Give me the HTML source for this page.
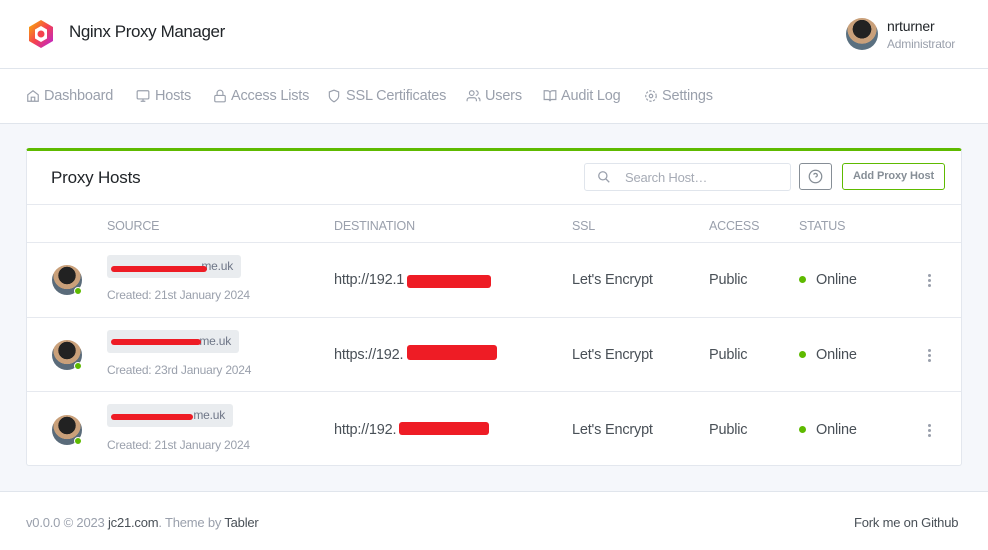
<!DOCTYPE html>
<html><head><meta charset="utf-8"><style>
*{box-sizing:border-box;margin:0;padding:0}
body{width:988px;height:550px;background:#f5f7fb;font-family:"Liberation Sans",sans-serif;color:#495057;position:relative;overflow:hidden;font-size:14px;letter-spacing:-0.2px}
.abs{position:absolute}
.hdr{left:0;top:0;width:988px;height:69px;background:#fff;border-bottom:1px solid #e0e5ec}
.nav{left:0;top:69px;width:988px;height:55px;background:#fff;border-bottom:1px solid #e0e5ec}
.nav span{position:absolute;top:19px;color:#9aa0ac;font-size:14.5px}
.nav svg{position:absolute;top:20px}
.card{left:26px;top:148px;width:936px;height:318px;background:#fff;border:1px solid #e3e7ee;border-top:3px solid #5eba00;border-radius:3px}
.line{position:absolute;left:0;width:934px;height:1px;background:#e6e9ef}
.th{position:absolute;top:68px;font-size:12.5px;color:#9aa0ac}
.av{position:absolute;width:30px;height:30px;border-radius:50%;background:radial-gradient(circle at 50% 35%,#222 0 35%,#c9a07a 36% 55%,#5a6b7a 56%);}
.dot{position:absolute;width:8px;height:8px;border-radius:50%;background:#5eba00;border:1px solid #fff}
.pill{position:absolute;background:#e9ecef;border-radius:3px;height:23px;font-size:12px;color:#6e7687;padding:4px 8px;text-align:right}
.red{position:absolute;background:#ee1c25;border-radius:3px}
.sm{position:absolute;font-size:12px;color:#9aa0ac}
.td{position:absolute;font-size:14.5px;color:#495057}
.gd{position:absolute;width:7px;height:7px;border-radius:50%;background:#5eba00}
.kb{position:absolute;width:3px;height:3px;border-radius:50%;background:#9aa0ac}
</style></head><body>
<div class="abs hdr">
<svg class="abs" style="left:27px;top:19px" width="28" height="30" viewBox="0 0 28 30"><defs><linearGradient id="g" x1="0" y1="0" x2="1" y2="1"><stop offset="0" stop-color="#f7b500"/><stop offset=".5" stop-color="#f5424d"/><stop offset="1" stop-color="#b620e0"/></linearGradient></defs><polygon points="14,1 26,8 26,22 14,29 2,22 2,8" fill="url(#g)"/><polygon points="14,7 20,10.5 20,19.5 14,23 8,19.5 8,10.5" fill="#fff"/><circle cx="14" cy="15" r="3.5" fill="#f5424d"/></svg>
<div class="abs" style="left:69px;top:22px;font-size:17px;letter-spacing:-0.4px;color:#212529">Nginx Proxy Manager</div>
<div class="abs" style="left:846px;top:18px;width:32px;height:32px;border-radius:50%;background:radial-gradient(circle at 50% 35%,#222 0 35%,#c9a07a 36% 55%,#5a7080 56%)"></div>
<div class="abs" style="left:887px;top:18px;font-size:14px;color:#212529">nrturner</div>
<div class="abs" style="left:887px;top:37px;font-size:12px;color:#9aa0ac">Administrator</div>
</div>
<div class="abs nav">
<svg style="left:26px" width="14" height="14" viewBox="0 0 24 24" fill="none" stroke="#9aa0ac" stroke-width="2"><path d="M3 10l9-7 9 7v11H3z M9 21v-7h6v7"/></svg><span style="left:44px">Dashboard</span>
<svg style="left:136px" width="14" height="14" viewBox="0 0 24 24" fill="none" stroke="#9aa0ac" stroke-width="2"><rect x="2" y="3" width="20" height="14" rx="2"/><path d="M8 21h8M12 17v4"/></svg><span style="left:155px">Hosts</span>
<svg style="left:213px" width="14" height="14" viewBox="0 0 24 24" fill="none" stroke="#9aa0ac" stroke-width="2"><rect x="3" y="11" width="18" height="11" rx="2"/><path d="M7 11V7a5 5 0 0110 0v4"/></svg><span style="left:231px">Access Lists</span>
<svg style="left:327px" width="14" height="14" viewBox="0 0 24 24" fill="none" stroke="#9aa0ac" stroke-width="2"><path d="M12 22s8-4 8-10V5l-8-3-8 3v7c0 6 8 10 8 10z"/></svg><span style="left:346px">SSL Certificates</span>
<svg style="left:466px" width="15" height="14" viewBox="0 0 24 24" fill="none" stroke="#9aa0ac" stroke-width="2"><circle cx="9" cy="7" r="4"/><path d="M1 21v-2a4 4 0 014-4h8a4 4 0 014 4v2M16 3a4 4 0 010 8M23 21v-2a4 4 0 00-3-4"/></svg><span style="left:485px">Users</span>
<svg style="left:543px" width="14" height="14" viewBox="0 0 24 24" fill="none" stroke="#9aa0ac" stroke-width="2"><path d="M2 3h6a4 4 0 014 4v14a3 3 0 00-3-3H2zM22 3h-6a4 4 0 00-4 4v14a3 3 0 013-3h7z"/></svg><span style="left:561px">Audit Log</span>
<svg style="left:644px" width="14" height="14" viewBox="0 0 24 24" fill="none" stroke="#9aa0ac" stroke-width="2"><circle cx="12" cy="12" r="3"/><circle cx="12" cy="12" r="9" stroke-dasharray="4 2.5"/></svg><span style="left:662px">Settings</span>
</div>
<div class="abs card">
<div class="abs" style="left:24px;top:17px;font-size:17px;color:#212529">Proxy Hosts</div>
<div class="abs" style="left:557px;top:12px;width:207px;height:28px;border:1px solid #e0e5ec;border-radius:3px"></div>
<svg class="abs" style="left:570px;top:19px" width="14" height="14" viewBox="0 0 24 24" fill="none" stroke="#9aa0ac" stroke-width="2.2"><circle cx="10" cy="10" r="7"/><path d="M15 15l6 6"/></svg>
<div class="abs" style="left:598px;top:19px;font-size:13px;color:#a6abb5">Search Host…</div>
<div class="abs" style="left:772px;top:12px;width:33px;height:27px;border:1px solid #868e96;border-radius:3px"></div>
<svg class="abs" style="left:781px;top:18px" width="15" height="15" viewBox="0 0 24 24" fill="none" stroke="#868e96" stroke-width="2"><circle cx="12" cy="12" r="10"/><path d="M9.1 9a3 3 0 015.8 1c0 2-3 3-3 3M12 17h.01"/></svg>
<div class="abs" style="left:815px;top:12px;width:103px;height:27px;border:1px solid #5eba00;border-radius:3px;font-size:11px;font-weight:bold;color:#868e96;text-align:center;line-height:25px;white-space:nowrap;letter-spacing:-0.1px">Add Proxy Host</div>
<div class="line" style="top:53px"></div>
<div class="th" style="left:80px">SOURCE</div><div class="th" style="left:307px">DESTINATION</div><div class="th" style="left:545px">SSL</div><div class="th" style="left:682px">ACCESS</div><div class="th" style="left:772px">STATUS</div>
<div class="line" style="top:91px"></div>
<div class="line" style="top:166px"></div>
<div class="line" style="top:240px"></div>

<div class="av" style="left:25px;top:114px"></div><div class="dot" style="left:47px;top:136px"></div>
<div class="pill" style="left:80px;top:104px;width:134px">me.uk</div><div class="red" style="left:84px;top:115px;width:96px;height:6px"></div>
<div class="sm" style="left:80px;top:137px">Created: 21st January 2024</div>
<div class="td" style="left:307px;top:121px">http://192.1</div><div class="red" style="left:380px;top:124px;width:84px;height:13px"></div>
<div class="td" style="left:545px;top:121px">Let's Encrypt</div><div class="td" style="left:682px;top:121px">Public</div>
<div class="gd" style="left:772px;top:125px"></div><div class="td" style="left:789px;top:121px">Online</div>
<div class="kb" style="left:901px;top:123px"></div><div class="kb" style="left:901px;top:128px"></div><div class="kb" style="left:901px;top:133px"></div>

<div class="av" style="left:25px;top:189px"></div><div class="dot" style="left:47px;top:211px"></div>
<div class="pill" style="left:80px;top:179px;width:132px">me.uk</div><div class="red" style="left:84px;top:188px;width:90px;height:6px"></div>
<div class="sm" style="left:80px;top:212px">Created: 23rd January 2024</div>
<div class="td" style="left:307px;top:196px">https://192.</div><div class="red" style="left:380px;top:194px;width:90px;height:15px"></div>
<div class="td" style="left:545px;top:196px">Let's Encrypt</div><div class="td" style="left:682px;top:196px">Public</div>
<div class="gd" style="left:772px;top:200px"></div><div class="td" style="left:789px;top:196px">Online</div>
<div class="kb" style="left:901px;top:198px"></div><div class="kb" style="left:901px;top:203px"></div><div class="kb" style="left:901px;top:208px"></div>

<div class="av" style="left:25px;top:264px"></div><div class="dot" style="left:47px;top:286px"></div>
<div class="pill" style="left:80px;top:253px;width:126px">me.uk</div><div class="red" style="left:84px;top:263px;width:82px;height:6px"></div>
<div class="sm" style="left:80px;top:287px">Created: 21st January 2024</div>
<div class="td" style="left:307px;top:271px">http://192.</div><div class="red" style="left:372px;top:271px;width:90px;height:13px"></div>
<div class="td" style="left:545px;top:271px">Let's Encrypt</div><div class="td" style="left:682px;top:271px">Public</div>
<div class="gd" style="left:772px;top:275px"></div><div class="td" style="left:789px;top:271px">Online</div>
<div class="kb" style="left:901px;top:273px"></div><div class="kb" style="left:901px;top:278px"></div><div class="kb" style="left:901px;top:283px"></div>
</div>
<div class="abs" style="left:0;top:491px;width:988px;height:59px;background:#fff;border-top:1px solid #e0e5ec"></div>
<div class="abs" style="left:26px;top:515px;font-size:13px;color:#9aa0ac">v0.0.0 © 2023 <span style="color:#495057">jc21.com</span>. Theme by <span style="color:#495057">Tabler</span></div>
<div class="abs" style="left:854px;top:515px;font-size:13px;color:#495057">Fork me on Github</div>
</body></html>
